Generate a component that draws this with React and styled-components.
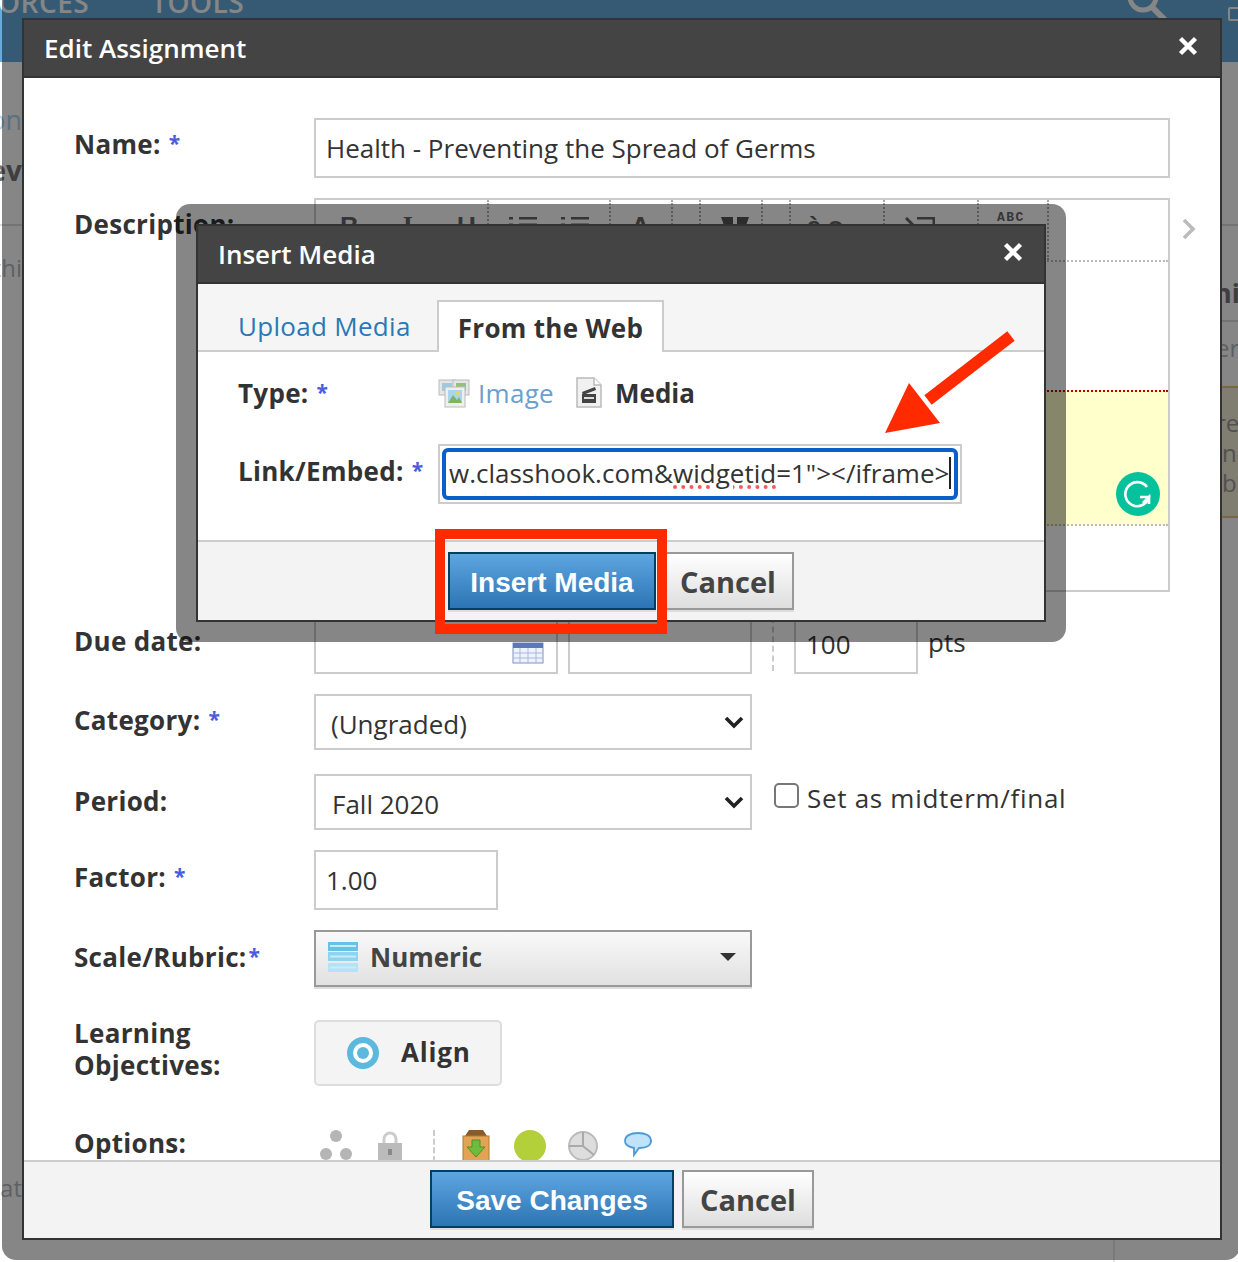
import React from 'react'
import styled, { createGlobalStyle } from 'styled-components'

const GlobalStyle = createGlobalStyle`
  html, body {
    margin: 0;
    padding: 0;
    background: #fff;
    overflow: hidden;
  }
  * { box-sizing: border-box; }
`

const SANS = `"Open Sans", "Noto Sans", sans-serif`
const ARIAL = `"Liberation Sans", Arial, sans-serif`

const Page = styled.div`
  position: relative;
  width: 1238px;
  height: 1262px;
  overflow: hidden;
  background: #fff;
  font-family: ${SANS};
  color: #333;
`

/* what is left of the page under the dialogs */
const BackPage = styled.div`
  height: 100%;
  display: flex;
  flex-direction: column;
`
const TopBar = styled.div`
  height: 62px;
  flex: none;
  background: #67abdb;
  display: flex;
  color: #fff;
  font-size: 28px;
  font-weight: 600;
  line-height: 20px;
  letter-spacing: 0.5px;
  overflow: hidden;
`
const TopItem = styled.span`
  margin-top: -8px;
  margin-left: ${p => p.$ml}px;
  white-space: nowrap;
`
const SearchMark = styled.svg`
  margin-left: 880px;
  margin-top: -16px;
  flex: none;
`
const BoxMark = styled.span`
  width: 14px;
  height: 14px;
  flex: none;
  margin: 7px 0 0 58px;
  border: 2px solid #fff;
  border-radius: 2px;
`
const BackBody = styled.div`
  flex: 1;
  display: flex;
`
const LeftPeek = styled.div`
  width: 22px;
  flex: none;
  overflow: hidden;
  font-size: 24px;
  display: flex;
  flex-direction: column;
  align-items: flex-end;
`
const Peek = styled.span`
  display: block;
  height: ${p => p.$h || 40}px;
  line-height: ${p => p.$h || 40}px;
  margin-top: ${p => p.$mt || 0}px;
  margin-left: ${p => p.$ml || 0}px;
  color: ${p => p.$color || '#b4b8bd'};
  font-weight: ${p => p.$weight || 400};
  font-size: ${p => p.$size || 24}px;
  white-space: nowrap;
`
const PeekLine = styled.div`
  flex: none;
  height: 2px;
  margin-top: ${p => p.$mt}px;
  background: #ddd;
  align-self: stretch;
`
const MiddlePeek = styled.div`
  width: 1093px;
  flex: none;
  display: flex;
  flex-direction: column;
  justify-content: flex-end;
`
const TailLine = styled.div`
  height: 24px;
  border-right: 2px solid #e6e6e6;
`
const RightPeek = styled.div`
  flex: 1;
  padding-left: 107px;
  overflow: hidden;
  font-size: 24px;
  display: flex;
  flex-direction: column;
`
const NoteBox = styled.div`
  margin-top: 18px;
  height: 132px;
  border-top: 2px solid #e2c77e;
  border-bottom: 2px solid #e2c77e;
  background: #f4eed8;
  padding-top: 20px;
  line-height: 30px;
  color: #9a9a9a;
  white-space: nowrap;
  text-indent: -6px;
`

/* grey frame that holds a dialog */
const Frame = styled.div`
  position: absolute;
  background: rgba(0, 0, 0, 0.475);
  border-radius: 14px;
  left: ${p => p.$left}px;
  top: ${p => p.$top}px;
  width: ${p => p.$width}px;
  height: ${p => p.$height}px;
  padding: ${p => p.$pad};
`
const Dialog = styled.div`
  height: 100%;
  border: 2px solid #333;
  background: #fff;
  display: flex;
  flex-direction: column;
  overflow: hidden;
`
const DialogHeader = styled.div`
  height: 58px;
  flex: none;
  background: #444;
  border-bottom: 2px solid #333;
  color: #fff;
  display: flex;
  align-items: center;
  justify-content: space-between;
  padding: 0 ${p => p.$padr}px 0 ${p => p.$padl}px;
  font-size: 26px;
  font-weight: 600;
`
const CloseIcon = () => (
  <svg width="20" height="20" viewBox="0 0 20 20" style={{ marginTop: -4 }}>
    <path d="M2.5 2.5 L17.5 17.5 M17.5 2.5 L2.5 17.5" stroke="#fff" strokeWidth="4.4" />
  </svg>
)

const FormBody = styled.div`
  flex: 1;
  min-height: 0;
  overflow: hidden;
  padding: 40px 0 0 50px;
`
const Row = styled.div`
  display: grid;
  grid-template-columns: 240px 1fr;
  margin-bottom: ${p => p.$mb ?? 20}px;
`
const Label = styled.div`
  font-size: 26px;
  font-weight: 700;
  line-height: 32px;
  letter-spacing: 0.3px;
  padding-top: ${p => p.$pt ?? 11}px;
  margin-top: ${p => p.$mt ?? 0}px;
  color: #333;
  white-space: nowrap;
`
const Star = styled.span`
  color: #4a5bdc;
  font-size: 21px;
  margin-left: ${p => p.$ml ?? 8}px;
  position: relative;
  top: -3px;
`
const Field = styled.div`
  width: ${p => p.$w}px;
  height: ${p => p.$h || 60}px;
  border: 2px solid #ccc;
  background: #fff;
  padding-left: ${p => p.$pl ?? 10}px;
  font-size: 26px;
  display: flex;
  align-items: center;
  justify-content: space-between;
  color: #333;
  flex: none;
`
const SelectField = styled(Field)`
  padding-right: 5px;
  padding-top: 4px;
`
const Chevron = styled.svg`
  margin-top: -5px;
`
const DownChevron = () => (
  <Chevron width="22" height="14" viewBox="0 0 22 14">
    <path d="M3 3 L11 11 L19 3" fill="none" stroke="#222" strokeWidth="3.6" />
  </Chevron>
)

/* description editor */
const EditorWrap = styled.div`
  display: flex;
  align-items: flex-start;
`
const Editor = styled.div`
  width: 856px;
  height: 394px;
  border: 2px solid #ccc;
  flex: none;
  display: flex;
  flex-direction: column;
`
const Toolbar = styled.div`
  height: 62px;
  flex: none;
  display: flex;
  border-bottom: 2px dotted #bbb;
`
const ToolGroup = styled.div`
  width: ${p => p.$w}px;
  flex: none;
  border-right: 2px dotted #aaa;
  display: flex;
  padding: 8px 0 0 ${p => p.$pl || 0}px;
  gap: ${p => p.$gap || 0}px;
  font-size: 26px;
  font-weight: 700;
  color: #666;
  line-height: 36px;
  font-family: ${ARIAL};
`
const ToolGlyph = styled.svg`
  margin-top: 9px;
  flex: none;
`
const SerifI = styled.span`
  font-family: "Liberation Serif", serif;
`
const SpellMark = styled.span`
  font-family: "Liberation Mono", monospace;
  font-size: 13px;
  font-weight: 700;
  line-height: 20px;
  letter-spacing: 1.5px;
`
const EditorBlank = styled.div`
  height: ${p => p.$h}px;
  flex: none;
`
const DraftBlock = styled.div`
  height: 136px;
  flex: none;
  background: #ffc;
  border-top: 2px dotted #b00;
  border-bottom: 2px dotted #bbb;
  display: flex;
  justify-content: flex-end;
  align-items: flex-end;
  padding: 0 8px 8px 0;
`
const SideArrow = styled.svg`
  margin: 20px 0 0 12px;
  flex: none;
`

/* due date row */
const DueRow = styled.div`
  display: flex;
  align-items: center;
`
const CalendarMark = styled.svg`
  margin: 18px 12px 0 0;
  flex: none;
`
const DotSep = styled.div`
  width: 0;
  height: ${p => p.$h}px;
  border-left: 2px dashed #ccc;
  margin: ${p => p.$m};
  flex: none;
`
const Pts = styled.span`
  font-size: 26px;
  margin: -4px 0 0 10px;
`
const MidtermCheck = styled.label`
  display: flex;
  align-items: center;
  gap: 8px;
  font-size: 26px;
  letter-spacing: 0.7px;
  margin: -8px 0 0 22px;
  white-space: nowrap;
`
const CheckBox = styled.span`
  width: 25px;
  height: 25px;
  margin-top: -6px;
  border: 2px solid #777;
  border-radius: 5px;
  background: #fff;
  flex: none;
`
const InlineRow = styled.div`
  display: flex;
  align-items: center;
`
const ScaleSelect = styled.div`
  width: 438px;
  height: 57px;
  border: 2px solid #999;
  background: linear-gradient(#f9f9f9, #e1e1e1);
  box-shadow: 0 2px 0 #ddd;
  display: flex;
  align-items: center;
  padding: 0 14px 4px 12px;
  font-size: 26px;
  font-weight: 700;
  color: #444;
`
const ScaleName = styled.span`
  margin-left: 12px;
  flex: 1;
`
const Caret = styled.span`
  width: 0;
  height: 0;
  border-left: 8px solid transparent;
  border-right: 8px solid transparent;
  border-top: 8px solid #333;
`
const AlignButton = styled.div`
  width: 188px;
  height: 66px;
  border: 2px solid #ddd;
  border-radius: 5px;
  background: #f4f4f4;
  display: flex;
  align-items: center;
  gap: 22px;
  padding: 0 0 2px 31px;
  font-size: 26px;
  font-weight: 700;
  letter-spacing: 0.8px;
  color: #333;
`
const OptionsBar = styled.div`
  display: flex;
  align-items: flex-start;
  padding: 7px 0 0 6px;
  height: 40px;
`
const OptionIcon = styled.svg`
  margin-left: ${p => p.$ml}px;
  flex: none;
`

/* footers and buttons */
const Footer = styled.div`
  flex: none;
  height: ${p => p.$h}px;
  background: #f3f3f3;
  border-top: 2px solid #ccc;
  display: flex;
  justify-content: center;
  gap: ${p => p.$gap}px;
  padding-top: ${p => p.$pt}px;
`
const PrimaryButton = styled.div`
  width: ${p => p.$w}px;
  height: 58px;
  border: 2px solid #003f63;
  background: linear-gradient(#5ea6e0, #2d74b4);
  box-shadow: 0 2px 0 #ddd;
  color: #fff;
  font-family: ${ARIAL};
  font-weight: 700;
  font-size: 28px;
  padding-top: 3px;
  display: flex;
  align-items: center;
  justify-content: center;
`
const CancelButton = styled.div`
  width: 132px;
  height: 58px;
  border: 2px solid #999;
  background: linear-gradient(#fff, #dedede);
  box-shadow: 0 2px 0 #ddd;
  color: #444;
  font-weight: 700;
  font-size: 29px;
  display: flex;
  align-items: center;
  justify-content: center;
`

/* insert media dialog */
const TabStrip = styled.div`
  height: 68px;
  flex: none;
  background: #f5f5f5;
  border-bottom: 2px solid #ccc;
  display: flex;
  align-items: flex-end;
  padding-left: 40px;
`
const TabLink = styled.span`
  color: #2a78b8;
  font-size: 26px;
  letter-spacing: 0.3px;
  line-height: 36px;
  margin-bottom: 6px;
  width: 199px;
`
const ActiveTab = styled.div`
  width: 227px;
  height: 52px;
  margin-bottom: -2px;
  background: #fff;
  border: 2px solid #ccc;
  border-bottom: 0;
  text-align: center;
  font-size: 26px;
  font-weight: 700;
  letter-spacing: 0.3px;
  line-height: 52px;
  color: #333;
`
const MediaForm = styled.div`
  flex: 1;
  padding: 24px 0 0 40px;
`
const MediaRow = styled.div`
  display: grid;
  grid-template-columns: 200px 1fr;
  margin-bottom: ${p => p.$mb || 0}px;
`
const TypeOptions = styled.div`
  display: flex;
  align-items: center;
  font-size: 26px;
  height: 34px;
`
const TypeLink = styled.span`
  color: #6a9fcf;
  letter-spacing: 0.3px;
  margin: 0 22px 0 8px;
`
const TypeActive = styled.span`
  font-weight: 700;
  margin-left: 13px;
`
const EmbedBox = styled.div`
  width: 524px;
  height: 60px;
  border: 2px solid #ccc;
  padding: 2px;
`
const EmbedFocus = styled.div`
  height: 100%;
  border: 4px solid #0a60c8;
  border-radius: 6px;
  padding-left: 3px;
  font-size: 26px;
  line-height: 42px;
  white-space: nowrap;
  overflow: hidden;
  color: #333;
  display: flex;
`
const Misspelled = styled.span`
  text-decoration: underline dotted #f25c5c 4px;
  text-underline-offset: 2px;
`
const TextCaret = styled.span`
  width: 2px;
  height: 32px;
  margin-top: 5px;
  background: #222;
  flex: none;
`

/* red marks drawn on the screenshot */
const Highlight = styled.div`
  position: absolute;
  left: 435px;
  top: 529px;
  width: 232px;
  height: 105px;
  border: 10px solid #ff2a00;
`
const ArrowMark = styled.svg`
  position: absolute;
  left: 880px;
  top: 330px;
`

const ToolLines = ({ w }) => (
  <ToolGlyph width={w} height="10" viewBox={`0 0 ${w} 10`}>
    <path d={`M0 1 h4 M10 1 H${w}`} stroke="#666" strokeWidth="3" />
    <path d={`M0 8 h4 M10 8 H${w}`} stroke="#666" strokeWidth="3" />
  </ToolGlyph>
)

const ImageIcon = () => (
  <svg width="32" height="32" viewBox="0 0 32 32">
    <rect x="1" y="3" width="16" height="15" fill="#e6e6e6" stroke="#bbb" />
    <rect x="15" y="3" width="16" height="15" fill="#e6e6e6" stroke="#bbb" />
    <rect x="4" y="6" width="10" height="8" fill="#9ccbe8" />
    <rect x="18" y="6" width="10" height="8" fill="#8fc27a" />
    <rect x="7" y="10" width="20" height="20" fill="#efefef" stroke="#bbb" />
    <rect x="10" y="13" width="14" height="13" fill="#a8d6ee" />
    <path d="M10 26 L15 18 L19 23 L21 20 L24 26 Z" fill="#7fb55f" />
    <circle cx="20" cy="16" r="2" fill="#f0d35a" />
  </svg>
)
const MediaIcon = () => (
  <svg width="26" height="32" viewBox="0 0 26 32">
    <path d="M1 1 H18 L25 8 V30 H1 Z" fill="#f1f1f1" stroke="#bbb" strokeWidth="1.5" />
    <path d="M18 1 V8 H25" fill="#fff" stroke="#bbb" strokeWidth="1.5" />
    <rect x="6" y="17" width="14" height="9" fill="#444" />
    <path d="M6 15 L19 10 L20 13 L7 18 Z" fill="#444" />
    <rect x="8" y="20" width="10" height="2" fill="#ddd" />
  </svg>
)
const GrammarlyIcon = () => (
  <svg width="44" height="44" viewBox="0 0 44 44">
    <circle cx="22" cy="22" r="22" fill="#05c29c" />
    <path d="M31 15 A12 12 0 1 0 33 25 H24" fill="none" stroke="#fff" strokeWidth="2.6" />
    <path d="M27 31 L33 25 L33 32" fill="none" stroke="#fff" strokeWidth="2.6" />
  </svg>
)
const ScaleIcon = () => (
  <svg width="30" height="30" viewBox="0 0 30 30">
    <rect width="30" height="9" fill="#66c3e6" />
    <rect y="10" width="30" height="9" fill="#8fd3ee" />
    <rect y="21" width="30" height="9" fill="#b5e2f4" />
    <path d="M2 4 H28 M2 14.5 H28 M2 25.5 H28" stroke="#c8ecf8" strokeWidth="2" />
  </svg>
)

export default function App() {
  return (
    <Page>
      <GlobalStyle />

      <BackPage>
        <TopBar>
          <TopItem $ml={-2}>ORCES</TopItem>
          <TopItem $ml={62}>TOOLS</TopItem>
          <SearchMark width="46" height="40" viewBox="0 0 46 40">
            <circle cx="19" cy="13" r="13" fill="none" stroke="#fff" strokeWidth="5" />
            <path d="M28 23 L41 36" stroke="#fff" strokeWidth="6" />
          </SearchMark>
          <BoxMark />
        </TopBar>
        <BackBody>
          <LeftPeek>
            <Peek $mt={38} $color="#b0d6f0" $size={27}>on</Peek>
            <Peek $mt={10} $color="#777" $weight={700} $size={28}>ev</Peek>
            <PeekLine $mt={34} />
            <Peek $mt={22}>thi</Peek>
            <Peek $mt={880}>at</Peek>
          </LeftPeek>
          <MiddlePeek>
            <TailLine />
          </MiddlePeek>
          <RightPeek>
            <PeekLine $mt={162} />
            <Peek $mt={47} $ml={-8} $color="#777" $weight={700} $size={27}>hi</Peek>
            <PeekLine $mt={7} />
            <Peek $mt={6} $ml={-6}>er</Peek>
            <NoteBox>re<br />nn<br />br</NoteBox>
          </RightPeek>
        </BackBody>
      </BackPage>

      <Frame $left={2} $top={-20} $width={1238} $height={1280} $pad="38px 18px 20px 20px">
        <Dialog>
          <DialogHeader $padl={20} $padr={22}>
            <span>Edit Assignment</span>
            <CloseIcon />
          </DialogHeader>
          <FormBody>
            <Row>
              <Label $pt={10}>Name:<Star>*</Star></Label>
              <Field $w={856}>Health - Preventing the Spread of Germs</Field>
            </Row>
            <Row $mb={22}>
              <Label $pt={10}>Description:</Label>
              <EditorWrap>
                <Editor>
                  <Toolbar>
                    <ToolGroup $w={173} $pl={24} $gap={44}><span>B</span><SerifI>I</SerifI><span>U</span></ToolGroup>
                    <ToolGroup $w={122} $pl={20} $gap={24}><ToolLines w={28} /><ToolLines w={28} /></ToolGroup>
                    <ToolGroup $w={62} $pl={20}>A</ToolGroup>
                    <ToolGroup $w={28} />
                    <ToolGroup $w={62} $pl={20}>
                      <ToolGlyph width="28" height="14" viewBox="0 0 28 14">
                        <path d="M0 0 H12 V14 H5 Z M16 0 H28 L23 14 H16 Z" fill="#555" />
                      </ToolGlyph>
                    </ToolGroup>
                    <ToolGroup $w={28} />
                    <ToolGroup $w={94} $pl={16} $gap={6}>à<span>o</span></ToolGroup>
                    <ToolGroup $w={94} $pl={20}>
                      <ToolGlyph width="30" height="14" viewBox="0 0 30 14">
                        <path d="M1 1 L12 12 M12 1 H29 V10" fill="none" stroke="#666" strokeWidth="3" />
                      </ToolGlyph>
                    </ToolGroup>
                    <ToolGroup $w={70} $pl={18}><SpellMark>ABC</SpellMark></ToolGroup>
                  </Toolbar>
                  <EditorBlank $h={128} />
                  <DraftBlock><GrammarlyIcon /></DraftBlock>
                </Editor>
                <SideArrow width="14" height="22" viewBox="0 0 14 22">
                  <path d="M2 2 L11 11 L2 20" fill="none" stroke="#bbb" strokeWidth="3.6" />
                </SideArrow>
              </EditorWrap>
            </Row>
            <Row>
              <Label>Due date:</Label>
              <DueRow>
                <Field $w={244}>
                  <span />
                  <CalendarMark width="32" height="22" viewBox="0 0 32 22">
                    <rect x="1" y="1" width="30" height="20" fill="#eef2fb" stroke="#7f93c0" />
                    <rect x="1" y="1" width="30" height="5" fill="#5c78b8" />
                    <path d="M1 11 H31 M1 16 H31 M8 6 V21 M16 6 V21 M24 6 V21" stroke="#a9b8da" />
                  </CalendarMark>
                </Field>
                <Field $w={184} style={{ marginLeft: 10 }} />
                <DotSep $h={54} $m="0 20px" />
                <Field $w={124}>100</Field>
                <Pts>pts</Pts>
              </DueRow>
            </Row>
            <Row $mb={24}>
              <Label $pt={10}>Category:<Star>*</Star></Label>
              <SelectField $w={438} $h={56} $pl={15}>(Ungraded)<DownChevron /></SelectField>
            </Row>
            <Row>
              <Label>Period:</Label>
              <InlineRow>
                <SelectField $w={438} $h={56} $pl={16}>Fall 2020<DownChevron /></SelectField>
                <MidtermCheck><CheckBox />Set as midterm/final</MidtermCheck>
              </InlineRow>
            </Row>
            <Row>
              <Label>Factor:<Star>*</Star></Label>
              <Field $w={184}>1.00</Field>
            </Row>
            <Row $mb={33}>
              <Label>Scale/Rubric:<Star $ml={2}>*</Star></Label>
              <ScaleSelect>
                <ScaleIcon />
                <ScaleName>Numeric</ScaleName>
                <Caret />
              </ScaleSelect>
            </Row>
            <Row $mb={37}>
              <Label $pt={0} $mt={-3}>Learning<br />Objectives:</Label>
              <AlignButton>
                <svg width="32" height="32" viewBox="0 0 32 32" style={{ marginTop: 2 }}>
                  <circle cx="16" cy="16" r="13" fill="#fff" stroke="#5ab9dd" strokeWidth="6" />
                  <circle cx="16" cy="16" r="6" fill="#5ab9dd" />
                </svg>
                Align
              </AlignButton>
            </Row>
            <Row $mb={0}>
              <Label $pt={4}>Options:</Label>
              <OptionsBar>
                <OptionIcon $ml={0} width="32" height="32" viewBox="0 0 32 32">
                  <circle cx="16" cy="6" r="6" fill="#b5b5b5" />
                  <circle cx="6" cy="24" r="6" fill="#b5b5b5" />
                  <circle cx="26" cy="24" r="6" fill="#b5b5b5" />
                </OptionIcon>
                <OptionIcon $ml={26} width="24" height="32" viewBox="0 0 24 32">
                  <path d="M6 14 V9 A6 6 0 0 1 18 9 V14" fill="none" stroke="#ccc" strokeWidth="3" />
                  <rect y="13" width="24" height="19" fill="#bbb" />
                  <rect x="10" y="19" width="4" height="6" fill="#888" />
                </OptionIcon>
                <DotSep $h={32} $m="0 0 0 31px" />
                <OptionIcon $ml={27} width="28" height="32" viewBox="0 0 28 32">
                  <path d="M3 6 L7 0 H21 L25 6 Z" fill="#8a5a2a" />
                  <rect x="1" y="6" width="26" height="26" fill="#e2a355" stroke="#b07a36" />
                  <path d="M10 10 H18 V17 H23 L14 27 L5 17 H10 Z" fill="#6fbb3f" stroke="#4d9327" />
                </OptionIcon>
                <OptionIcon $ml={24} width="32" height="32" viewBox="0 0 32 32">
                  <circle cx="16" cy="16" r="16" fill="#b3cf3a" />
                </OptionIcon>
                <OptionIcon $ml={22} width="30" height="32" viewBox="0 0 30 32">
                  <circle cx="15" cy="16" r="14" fill="#ddd" stroke="#bbb" strokeWidth="2" />
                  <path d="M15 2 V16 L26 25 M15 16 H1" stroke="#aaa" strokeWidth="2" fill="none" />
                </OptionIcon>
                <OptionIcon $ml={26} width="28" height="28" viewBox="0 0 28 28">
                  <path d="M14 3 C22 3 27 6 27 11 C27 16 21 18 15 18 L10 25 L10 18 C5 17 1 15 1 11 C1 6 6 3 14 3 Z" fill="#bfe3fa" stroke="#4d9ad6" strokeWidth="1.8" />
                </OptionIcon>
              </OptionsBar>
            </Row>
          </FormBody>
          <Footer $h={78} $gap={8} $pt={8}>
            <PrimaryButton $w={244}>Save Changes</PrimaryButton>
            <CancelButton>Cancel</CancelButton>
          </Footer>
        </Dialog>
      </Frame>

      <Frame $left={176} $top={204} $width={890} $height={438} $pad="20px">
        <Dialog>
          <DialogHeader $padl={20} $padr={21}>
            <span>Insert Media</span>
            <CloseIcon />
          </DialogHeader>
          <TabStrip>
            <TabLink>Upload Media</TabLink>
            <ActiveTab>From the Web</ActiveTab>
          </TabStrip>
          <MediaForm>
            <MediaRow $mb={33}>
              <Label $pt={1}>Type:<Star>*</Star></Label>
              <TypeOptions>
                <ImageIcon />
                <TypeLink>Image</TypeLink>
                <MediaIcon />
                <TypeActive>Media</TypeActive>
              </TypeOptions>
            </MediaRow>
            <MediaRow>
              <Label>Link/Embed:<Star $ml={8}>*</Star></Label>
              <EmbedBox>
                <EmbedFocus>
                  <span>w.classhook.com&amp;<Misspelled>widgetid</Misspelled>=1"&gt;&lt;/iframe&gt;</span>
                  <TextCaret />
                </EmbedFocus>
              </EmbedBox>
            </MediaRow>
          </MediaForm>
          <Footer $h={80} $gap={6} $pt={10}>
            <PrimaryButton $w={208}>Insert Media</PrimaryButton>
            <CancelButton>Cancel</CancelButton>
          </Footer>
        </Dialog>
      </Frame>

      <Highlight />
      <ArrowMark width="140" height="110" viewBox="0 0 140 110">
        <path d="M131 6 L48 70" stroke="#ff2a00" strokeWidth="12" />
        <path d="M5 103 L29 53 L60 93 Z" fill="#ff2a00" />
      </ArrowMark>
    </Page>
  )
}
